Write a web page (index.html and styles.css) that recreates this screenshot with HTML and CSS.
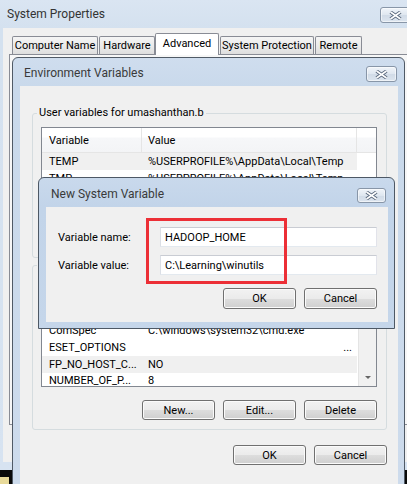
FILE: index.html
```html
<!DOCTYPE html>
<html lang="en">
<head>
<meta charset="utf-8">
<title>System Properties</title>
<link rel="stylesheet" href="styles.css">
</head>
<body>
<div class="desk">
  <div class="win sysprops">
    <div class="titlebar tb-sys">
      <span class="title">System Properties</span>
      <span class="closebtn cb-sys"><svg width="13" height="9" viewBox="0 0 13 9"><path d="M1.5 1 L11.5 8 M11.5 1 L1.5 8" stroke="#56657a" stroke-width="3.4"/><path d="M1.5 1 L11.5 8 M11.5 1 L1.5 8" stroke="#fff" stroke-width="1.6"/></svg></span>
    </div>
    <div class="sys-client">
      <div class="tabs">
        <div class="tab t1">Computer Name</div>
        <div class="tab t2">Hardware</div>
        <div class="tab t3 sel">Advanced</div>
        <div class="tab t4">System Protection</div>
        <div class="tab t5">Remote</div>
      </div>
      <div class="tabpanel"></div>
    </div>
  </div>
  <div class="peek"></div>

  <div class="win envvars">
    <div class="titlebar tb-env">
      <span class="title">Environment Variables</span>
      <span class="closebtn cb-env"><svg width="13" height="9" viewBox="0 0 13 9"><path d="M1.5 1 L11.5 8 M11.5 1 L1.5 8" stroke="#56657a" stroke-width="3.4"/><path d="M1.5 1 L11.5 8 M11.5 1 L1.5 8" stroke="#fff" stroke-width="1.6"/></svg></span>
    </div>
    <div class="env-client">
      <fieldset class="group g-user">
        <legend>User variables for umashanthan.b</legend>
        <div class="lv lv-user">
          <div class="lv-head"><span class="hc c1">Variable</span><span class="hc c2">Value</span><span class="hc c3"></span></div>
          <div class="lv-body">
            <div class="lv-rows">
              <div class="row sel"><span class="c1">TEMP</span><span class="c2">%USERPROFILE%\AppData\Local\Temp</span></div>
              <div class="row"><span class="c1">TMP</span><span class="c2">%USERPROFILE%\AppData\Local\Temp</span></div>
            </div>
          </div>
        </div>
        <div class="btnrow covered"><button class="btn">New...</button><button class="btn">Edit...</button><button class="btn">Delete</button></div>
      </fieldset>
      <fieldset class="group g-sys">
        <legend class="covered">System variables</legend>
        <div class="lv lv-sys">
          <div class="lv-head covered"><span class="hc c1">Variable</span><span class="hc c2">Value</span><span class="hc c3"></span></div>
          <div class="lv-body">
            <div class="lv-rows">
              <div class="row covered"><span class="c1">asl.log</span><span class="c2">Destination=file</span></div>
              <div class="row"><span class="c1">ComSpec</span><span class="c2">C:\windows\system32\cmd.exe</span></div>
              <div class="row"><span class="c1">ESET_OPTIONS</span><span class="c2 trunc">...</span></div>
              <div class="row sel"><span class="c1">FP_NO_HOST_C...</span><span class="c2">NO</span></div>
              <div class="row last"><span class="c1">NUMBER_OF_P...</span><span class="c2">8</span></div>
            </div>
            <div class="vscroll"><span class="sb-down"></span></div>
          </div>
        </div>
        <div class="btnrow"><button class="btn">New...</button><button class="btn">Edit...</button><button class="btn">Delete</button></div>
      </fieldset>
      <div class="btnrow footer"><button class="btn">OK</button><button class="btn">Cancel</button></div>
    </div>
  </div>

  <div class="win newvar">
    <div class="titlebar tb-new">
      <span class="title">New System Variable</span>
      <span class="closebtn cb-new"><svg width="13" height="9" viewBox="0 0 13 9"><path d="M1.5 1 L11.5 8 M11.5 1 L1.5 8" stroke="#56657a" stroke-width="3.4"/><path d="M1.5 1 L11.5 8 M11.5 1 L1.5 8" stroke="#fff" stroke-width="1.6"/></svg></span>
    </div>
    <div class="new-client">
      <div class="field"><label>Variable name:</label><div class="input">HADOOP_HOME</div></div>
      <div class="field"><label>Variable value:</label><div class="input">C:\Learning\winutils</div></div>
      <div class="btnrow"><button class="btn">OK</button><button class="btn">Cancel</button></div>
    </div>
  </div>
  <div class="annot"></div>
</div>
</body>
</html>
```
FILE: styles.css
```css
* { box-sizing: border-box; }
html, body { margin: 0; padding: 0; }
body {
  background: #0a0a0a;
  font-family: Roboto, "Liberation Sans", Arial, sans-serif;
  font-size: 11px;
  color: #000;
}
.desk { position: relative; width: 407px; height: 484px; overflow: hidden; background: #0a0a0a; }
.win { position: absolute; display: flex; flex-direction: column; }
.covered { visibility: hidden; }
.titlebar { display: flex; align-items: flex-start; flex: none; }
.title { font-size: 12px; line-height: 15px; color: #3a3a3a; white-space: nowrap; }
.closebtn {
  display: flex; align-items: center; justify-content: center;
  margin-left: auto;
  border: 1px solid #8896a8; border-radius: 3px;
  background: linear-gradient(#f1f5fa, #dfe7f0 50%, #d1dbe7 51%, #dce5ef);
  box-shadow: inset 0 0 0 1px rgba(255,255,255,.55);
}

/* System Properties */
.sysprops {
  left: 0; top: 0; width: 440px; height: 470px;
  background: linear-gradient(#dae5f2, #d4e1ef 28px, #d7e3f1);
  padding: 0 0 8px 3px;
}
.tb-sys { height: 28px; padding: 0 30px 0 4px; }
.tb-sys .title { margin-top: 7px; color: #333; }
.cb-sys { width: 30px; height: 16px; margin-top: 7px; }
.sys-client {
  flex: 1; background: #f0f0f0;
  padding: 5px 0 37px 6px;
  display: flex; flex-direction: column;
}
.tabs { display: flex; align-items: flex-end; height: 21px; padding-left: 3px; position: relative; z-index: 1; flex: none; }
.tab {
  height: 18px; border: 1px solid #898c95; border-bottom: 0; border-radius: 2px 2px 0 0;
  background: linear-gradient(#f5f5f5, #ebebeb 50%, #dedede);
  display: flex; align-items: center; justify-content: center; white-space: nowrap;
}
.t1 { width: 86px; }
.t2 { width: 56px; margin-left: 1px; }
.t3 { width: 64px; }
.t4 { width: 94px; margin-left: 1px; }
.t5 { width: 47px; margin-left: 1px; }
.tab.sel { height: 22px; margin-bottom: -1px; background: #fff; padding-bottom: 2px; }
.tabpanel { flex: 1; border: 1px solid #898c95; background: #f7f7f7; }
.peek { position: absolute; left: 0; top: 477px; width: 9px; height: 7px; background: #e8da9a; }

/* Environment Variables */
.envvars {
  left: 12px; top: 57px; width: 393px; height: 440px;
  border: 1px solid #505a66; border-radius: 6px 6px 0 0;
  background: linear-gradient(#cfddee, #c9d9eb 29px, #cddbec);
}
.tb-env { height: 28px; padding: 0 7px 0 11px; }
.tb-env .title { margin-top: 8px; }
.cb-env { width: 31px; height: 16px; margin-top: 8px; }
.env-client {
  flex: 1; margin: 0 6px 0 7px; background: #f0f0f0;
  padding: 20px 11px 0 12px;
  display: flex; flex-direction: column;
}
fieldset.group {
  margin: 0; padding: 0 9px 9px 8px; min-width: 0; width: 355px;
  border: 1px solid #d5dcdf; border-radius: 3px;
}
legend { margin-left: -4px; padding: 0 2px; line-height: 14px; }
.g-sys { margin-top: 2px; padding-bottom: 14px; }

.lv {
  border: 1px solid #828790; background: #fff; margin-top: 7px;
  display: flex; flex-direction: column; overflow: hidden; width: 336px;
}
.lv-user { height: 88px; }
.lv-sys { height: 108px; }
.lv-head {
  display: flex; height: 25px; flex: none;
  border-bottom: 1px solid #e5e5e5;
  background: linear-gradient(#fff 0, #fff 9px, #f6f7f9 10px, #f3f4f6);
}
.hc { display: flex; align-items: center; border-right: 1px solid #e5e5e5; }
.c1 { width: 100px; padding-left: 7px; flex: none; }
.c2 { width: 215px; padding-left: 6px; flex: none; }
.hc.c3 { flex: 1; border-right: 0; }
.lv-body { flex: 1; display: flex; overflow: hidden; }
.lv-rows { flex: 1; display: flex; flex-direction: column; }
.row { display: flex; align-items: center; height: 17px; flex: none; width: 315px; white-space: nowrap; }
.row span { overflow: hidden; line-height: 13px; }
.row.last { height: 14px; align-items: flex-start; padding-top: 2px; }
.row.last span { line-height: 12px; }
.row.sel { background: #f0f0f0; }
.row .trunc { display: flex; justify-content: flex-end; padding-right: 5px; }
.vscroll {
  width: 18px; flex: none; background: #f1f1f1; border-left: 1px solid #e4e4e4;
  display: flex; flex-direction: column; justify-content: flex-end;
}
.sb-down { height: 17px; display: flex; align-items: center; justify-content: center; }
.sb-down::after {
  content: ""; width: 0; height: 0;
  border-left: 3px solid transparent; border-right: 3px solid transparent;
  border-top: 3px solid #666;
}

.btnrow { display: flex; justify-content: flex-end; gap: 8px; margin-top: 13px; flex: none; }
.btn {
  width: 73px; height: 20px; padding: 0; margin: 0;
  font: inherit; color: #000;
  border: 1px solid #707070; border-radius: 3px;
  background: linear-gradient(#f2f2f2 0%, #ebebeb 50%, #dddddd 51%, #cfcfcf 100%);
  box-shadow: inset 0 0 0 1px #fbfbfb;
  display: flex; align-items: center; justify-content: center;
}
.footer { margin-top: 15px; }

/* New System Variable */
.newvar {
  left: 38px; top: 177px; width: 357px; height: 152px;
  border: 1px solid #4d5865; border-radius: 6px 6px 0 0;
  background: linear-gradient(#c9d9ec, #c2d4e9 29px, #c5d6ea);
}
.tb-new { height: 29px; padding: 0 8px 0 12px; }
.tb-new .title { margin-top: 9px; }
.cb-new { width: 29px; height: 15px; margin-top: 10px; }
.new-client {
  flex: 1; margin: 0 6px 6px 7px; background: #f0f0f0;
  padding: 20px 11px 0 12px;
}
.field { display: flex; align-items: center; height: 20px; }
.field + .field { margin-top: 8px; }
.field label { width: 102px; flex: none; }
.input {
  width: 217px; height: 20px; flex: none;
  border: 1px solid; border-color: #c9ccd3 #e2e3ea #e3e9ef #dbdfe6;
  background: #fff; padding-left: 4px;
  display: flex; align-items: center; white-space: nowrap;
}
.new-client .btn { height: 21px; }
.annot {
  position: absolute; left: 146px; top: 218px; width: 141px; height: 66px;
  border: 3px solid #ec2f36;
}
```
